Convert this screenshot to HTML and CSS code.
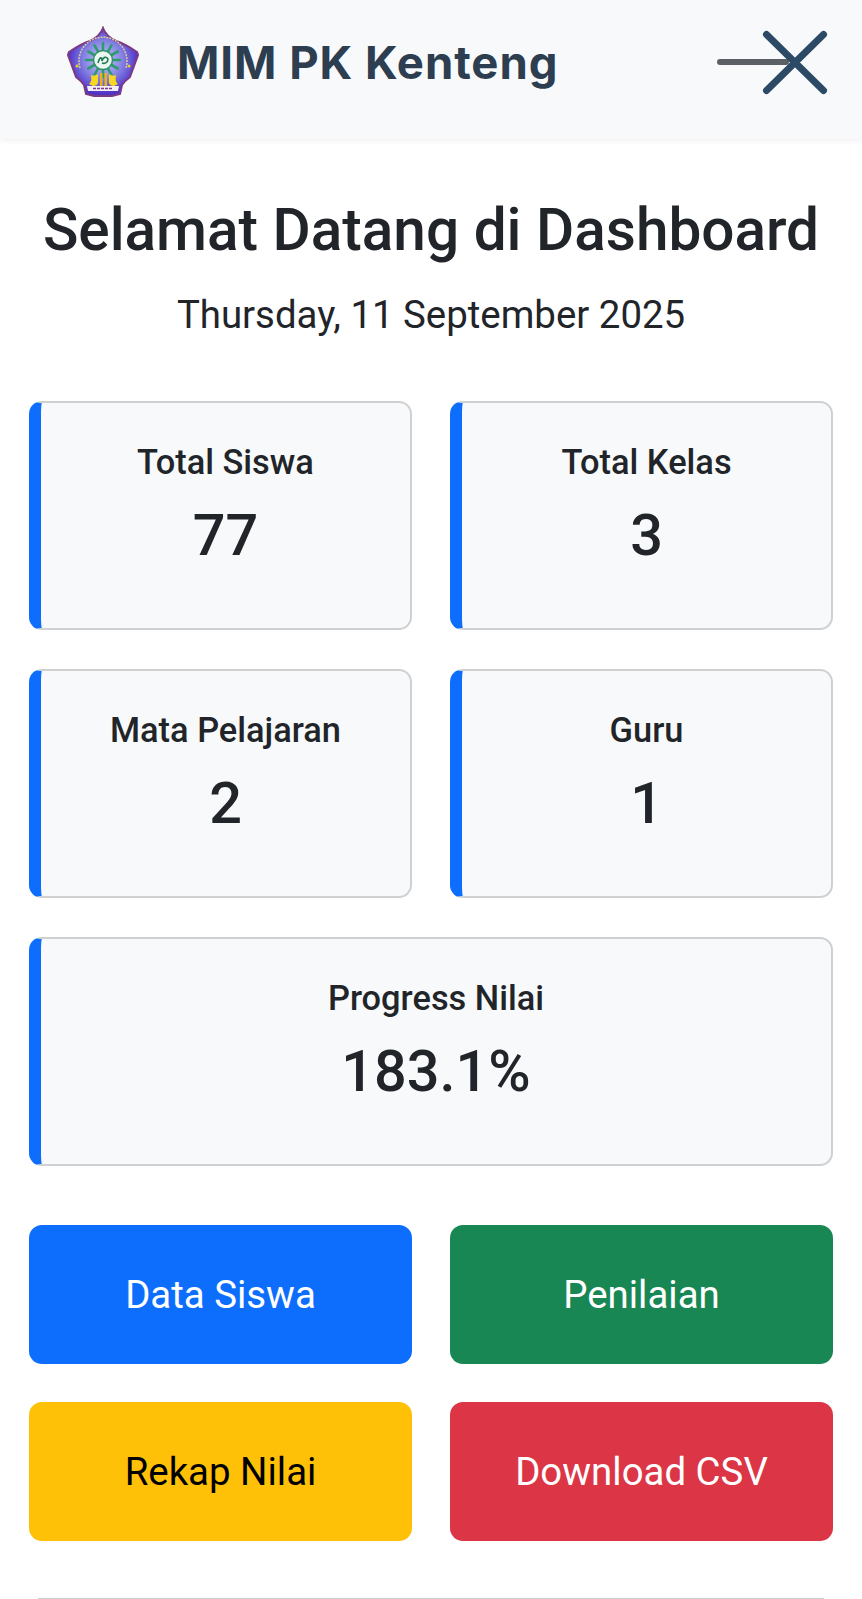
FILE: index.html
```html
<!DOCTYPE html>
<html lang="en">
<head>
    <meta charset="UTF-8">
    <meta name="viewport" content="width=device-width, initial-scale=1.0">
    <title>MIM PK Kenteng</title>
    <link rel="stylesheet" href="styles.css">
</head>
<body>
    <header class="navbar">
        <div class="brand">
            <svg class="logo" viewBox="0 0 72 72" aria-hidden="true">
                <defs>
                    <radialGradient id="shield-fill" cx="50%" cy="47%" r="50%">
                        <stop offset="0" stop-color="#c4cff2"/>
                        <stop offset="0.55" stop-color="#8683e4"/>
                        <stop offset="1" stop-color="#4f33c6"/>
                    </radialGradient>
                </defs>
                <path d="M36 2 C38 8 43 12 49 15 C56 17 64 22 70 26 L71 29 L63 51 C59 54 57 56 55 59 L53 68 L45 70 L27 70 L19 68 L17 59 C15 56 13 54 9 51 L1 29 L2 26 C8 22 16 17 23 15 C29 12 34 8 36 2 Z" fill="url(#shield-fill)" stroke="#7b3b84" stroke-width="2"/>
                <path d="M13 42 A24 24 0 1 1 59 42" fill="none" stroke="#d5cba0" stroke-width="1.5" stroke-dasharray="2 1"/>
                <circle cx="10" cy="40" r="1.5" fill="#e9cf3a"/>
                <circle cx="62" cy="40" r="1.5" fill="#e9cf3a"/>
                <g class="sun-rays" stroke="#2f9a72" stroke-width="2.6" stroke-linecap="round">
                    <path d="M36 17 V51"/>
                    <path d="M36 17 V51" transform="rotate(30 36 34)"/>
                    <path d="M36 17 V51" transform="rotate(60 36 34)"/>
                    <path d="M36 17 V51" transform="rotate(90 36 34)"/>
                    <path d="M36 17 V51" transform="rotate(120 36 34)"/>
                    <path d="M36 17 V51" transform="rotate(150 36 34)"/>
                </g>
                <circle cx="36" cy="34" r="9.5" fill="#eaf6ef" stroke="#2f8f68" stroke-width="1.5"/>
                <path d="M31 37 C33 30 35 31 35 35 C36 31 39 30 41 33 C41 37 37 38 35 37" fill="none" stroke="#1f7a55" stroke-width="1.6"/>
                <path d="M23 47 C24 51 28 50 31 48 V56 C31 59 28 60 26 60 L22 58 C25 56 25 51 23 47 Z" fill="#f8d81e"/>
                <path d="M50 47 C49 51 45 50 42 48 V56 C42 59 45 60 47 60 L51 58 C48 56 48 51 50 47 Z" fill="#f8d81e"/>
                <path d="M33 47 H35.5 V60 H33 Z M37.5 47 H40 V60 H37.5 Z" fill="#e9b413"/>
                <path d="M20 60 H52 L51 65 H21 Z" fill="#f4eef8"/>
                <path d="M26 62.5 H46" stroke="#7b3b84" stroke-width="1.3" stroke-dasharray="3 1"/>
            </svg>
            <span class="brand-name">MIM PK Kenteng</span>
        </div>
        <button class="toggler" aria-label="Toggle navigation">
            <svg class="toggler-icon" viewBox="0 0 112 66" aria-hidden="true">
                <path class="toggler-bar" d="M4 33 H70"/>
                <path class="toggler-x" d="M50.5 5.5 L107.5 61.5 M107.5 5.5 L50.5 61.5"/>
            </svg>
        </button>
    </header>

    <main class="content">
        <h1 class="welcome">Selamat Datang di Dashboard</h1>
        <p class="today">Thursday, 11 September 2025</p>

        <section class="stats">
            <div class="stat-card">
                <div class="stat-label">Total Siswa</div>
                <div class="stat-value">77</div>
            </div>
            <div class="stat-card">
                <div class="stat-label">Total Kelas</div>
                <div class="stat-value">3</div>
            </div>
            <div class="stat-card">
                <div class="stat-label">Mata Pelajaran</div>
                <div class="stat-value">2</div>
            </div>
            <div class="stat-card">
                <div class="stat-label">Guru</div>
                <div class="stat-value">1</div>
            </div>
            <div class="stat-card stat-wide">
                <div class="stat-label">Progress Nilai</div>
                <div class="stat-value">183.1%</div>
            </div>
        </section>

        <section class="actions">
            <a class="btn btn-blue" href="#">Data Siswa</a>
            <a class="btn btn-green" href="#">Penilaian</a>
            <a class="btn btn-yellow" href="#">Rekap Nilai</a>
            <a class="btn btn-red" href="#">Download CSV</a>
        </section>

        <hr class="divider">
    </main>
</body>
</html>
```

FILE: styles.css
```css
html, body {
    height: 100%;
}

body {
    font-family: Roboto, "Liberation Sans", sans-serif;
    color: #212529;
    background-color: #fff;
    margin: 0;
    padding: 0;
    overflow: hidden;
}

.navbar {
    height: 139px;
    box-sizing: border-box;
    display: flex;
    align-items: flex-start;
    justify-content: space-between;
    padding: 27px 34px 0 67px;
    background-color: #f8f9fa;
    box-shadow: 0 2px 6px rgba(0, 0, 0, 0.06);
}

.brand {
    display: flex;
    align-items: center;
    gap: 38px;
    height: 70px;
}

.logo {
    width: 72px;
    height: 72px;
}

.brand-name {
    font-family: Inter, Roboto, sans-serif;
    font-size: 45.5px;
    font-weight: 700;
    letter-spacing: 0.95px;
    color: #2c3e50;
}

.toggler {
    padding: 0;
    border: none;
    background: none;
    margin-top: 2px;
}

.toggler-icon {
    display: block;
    width: 112px;
    height: 66px;
    fill: none;
    stroke-linecap: round;
}

.toggler-bar {
    stroke: #5b6066;
    stroke-width: 6;
}

.toggler-x {
    stroke: #2c4a66;
    stroke-width: 7;
}

.content {
    padding: 0 29px;
}

.welcome {
    margin: 55px 0 0;
    text-align: center;
    font-size: 58.5px;
    line-height: 72px;
    font-weight: 500;
}

.today {
    margin: 27px 0 0;
    text-align: center;
    font-size: 38.4px;
    line-height: 44px;
}

.stats {
    display: grid;
    grid-template-columns: 1fr 1fr;
    gap: 39px 38px;
    margin-top: 64px;
}

.stat-card {
    height: 229px;
    box-sizing: border-box;
    padding-top: 40px;
    text-align: center;
    background-color: #f8f9fa;
    border: 2px solid #cfd0d2;
    border-left: 12px solid #0d6efd;
    border-radius: 13px;
}

.stat-wide {
    grid-column: 1 / 3;
}

.stat-label {
    font-size: 34.4px;
    line-height: 38px;
    font-weight: 500;
}

.stat-value {
    margin-top: 20px;
    font-size: 57.6px;
    line-height: 70px;
    font-weight: 500;
}

.actions {
    display: grid;
    grid-template-columns: 1fr 1fr;
    gap: 38px;
    margin-top: 59px;
}

.btn {
    height: 139px;
    display: flex;
    align-items: center;
    justify-content: center;
    font-size: 38.4px;
    color: #fff;
    text-decoration: none;
    border-radius: 13px;
}

.btn-blue {
    background-color: #0d6efd;
}

.btn-green {
    background-color: #198754;
}

.btn-yellow {
    background-color: #ffc107;
    color: #000;
}

.btn-red {
    background-color: #dc3545;
}

.divider {
    margin: 57px 9px 0;
    border: none;
    border-top: 2px solid #cfd0d2;
}
```
